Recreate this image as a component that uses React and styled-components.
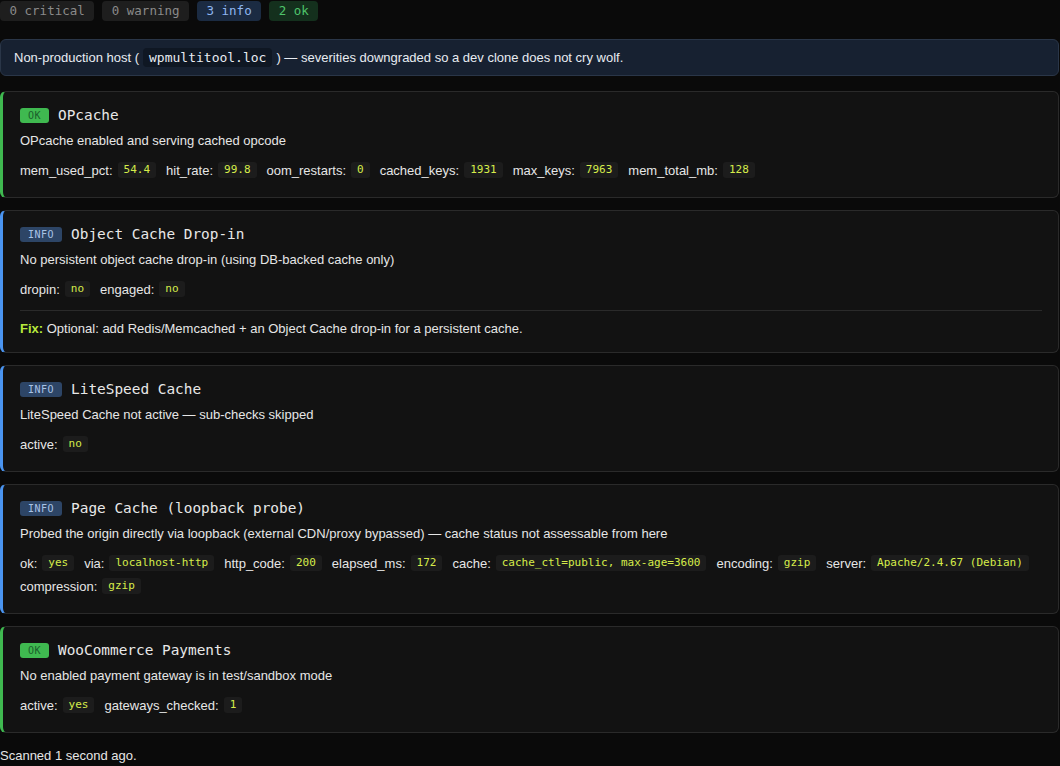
import React from 'react';
import styled, { createGlobalStyle } from 'styled-components';

const checks = [
  {
    level: 'ok',
    title: 'OPcache',
    message: 'OPcache enabled and serving cached opcode',
    facts: [
      ['mem_used_pct', '54.4'], ['hit_rate', '99.8'], ['oom_restarts', '0'],
      ['cached_keys', '1931'], ['max_keys', '7963'], ['mem_total_mb', '128'],
    ],
  },
  {
    level: 'info',
    title: 'Object Cache Drop-in',
    message: 'No persistent object cache drop-in (using DB-backed cache only)',
    facts: [['dropin', 'no'], ['engaged', 'no']],
    fix: 'Optional: add Redis/Memcached + an Object Cache drop-in for a persistent cache.',
  },
  {
    level: 'info',
    title: 'LiteSpeed Cache',
    message: 'LiteSpeed Cache not active \u2014 sub-checks skipped',
    facts: [['active', 'no']],
  },
  {
    level: 'info',
    title: 'Page Cache (loopback probe)',
    message: 'Probed the origin directly via loopback (external CDN/proxy bypassed) \u2014 cache status not assessable from here',
    facts: [
      ['ok', 'yes'], ['via', 'localhost-http'], ['http_code', '200'], ['elapsed_ms', '172'],
      ['cache', 'cache_ctl=public, max-age=3600'], ['encoding', 'gzip'], ['server', 'Apache/2.4.67 (Debian)'],
      ['compression', 'gzip'],
    ],
  },
  {
    level: 'ok',
    title: 'WooCommerce Payments',
    message: 'No enabled payment gateway is in test/sandbox mode',
    facts: [['active', 'yes'], ['gateways_checked', '1']],
  },
];

const GlobalStyle = createGlobalStyle`
  html, body {
    margin: 0;
    background: #0a0a0a;
  }
  body {
    color: #e6e6e6;
    font-family: "Liberation Sans", Arial, sans-serif;
    font-size: 13px;
  }
`;

const Page = styled.div`
  width: 1059px;
  padding-top: 1px;
`;

const Summary = styled.div`
  display: flex;
  gap: 8px;
`;

const tones = {
  critical: { bg: '#1e1e1e', fg: '#8a8a8a' },
  warning: { bg: '#1e1e1e', fg: '#8a8a8a' },
  info: { bg: '#1b2b42', fg: '#8fb6ef' },
  ok: { bg: '#14301d', fg: '#4fc46b' },
};

const Count = styled.span`
  font-family: "DejaVu Sans Mono", "Liberation Mono", monospace;
  font-size: 12.5px;
  line-height: 20px;
  padding: 0 9.5px;
  border-radius: 4px;
  background: ${(p) => tones[p.$tone].bg};
  color: ${(p) => tones[p.$tone].fg};
`;

const Banner = styled.div`
  margin-top: 18px;
  background: #172131;
  border: 1px solid #2a3648;
  border-radius: 6px;
  padding: 0 13px;
  height: 35px;
  display: flex;
  align-items: center;
  color: #e8ecf2;
`;

const Host = styled.code`
  font-family: "DejaVu Sans Mono", "Liberation Mono", monospace;
  font-size: 13px;
  background: #0f1723;
  border-radius: 4px;
  padding: 2px 6px;
  margin: 0 4px;
`;

const List = styled.div`
  margin-top: 15px;
  display: flex;
  flex-direction: column;
  gap: 12px;
`;

const Card = styled.div`
  background: #121212;
  border: 1px solid #2a2a2a;
  border-left: 3px solid ${(p) => (p.$level === 'ok' ? '#3fb950' : '#4a94f0')};
  border-radius: 6px;
  padding: 14px 16px 15px 17px;
`;

const Head = styled.div`
  display: flex;
  align-items: center;
  gap: 9px;
  height: 18px;
`;

const Badge = styled.span`
  font-family: "DejaVu Sans Mono", "Liberation Mono", monospace;
  font-size: 10px;
  letter-spacing: 0.5px;
  line-height: 15px;
  padding: 0 8px;
  border-radius: 3px;
  background: ${(p) => (p.$level === 'ok' ? '#3fb950' : '#2d4566')};
  color: ${(p) => (p.$level === 'ok' ? '#1b5e2c' : '#a9c3e6')};
`;

const Title = styled.span`
  font-family: "DejaVu Sans Mono", "Liberation Mono", monospace;
  font-size: 14.4px;
  color: #e8e8e8;
`;

const Message = styled.div`
  margin-top: 9px;
  line-height: 16px;
`;

const Facts = styled.div`
  margin-top: 13px;
  padding-bottom: 4px;
  display: flex;
  flex-wrap: wrap;
  align-items: center;
  gap: 7px 10px;
`;

const Pair = styled.span`
  display: flex;
  align-items: center;
  gap: 5px;
  white-space: nowrap;
`;

const Value = styled.code`
  font-family: "DejaVu Sans Mono", "Liberation Mono", monospace;
  font-size: 11px;
  line-height: 16px;
  padding: 0 6px;
  border-radius: 3px;
  background: #1c1c1c;
  color: #d6ec4a;
  white-space: nowrap;
`;

const Fix = styled.div`
  margin-top: 9px;
  padding-top: 10px;
  border-top: 1px solid #2a2a2a;
  line-height: 16px;
`;

const FixLabel = styled.b`
  color: #b6e83c;
`;

const Footer = styled.div`
  margin-top: 15px;
  line-height: 16px;
`;

export default function App() {
  return (
    <Page>
      <GlobalStyle />
      <Summary>
        <Count $tone="critical">0 critical</Count>
        <Count $tone="warning">0 warning</Count>
        <Count $tone="info">3 info</Count>
        <Count $tone="ok">2 ok</Count>
      </Summary>
      <Banner>
        Non-production host (<Host>wpmultitool.loc</Host>) — severities downgraded so a dev clone does not cry wolf.
      </Banner>
      <List>
        {checks.map((c) => (
          <Card key={c.title} $level={c.level}>
            <Head>
              <Badge $level={c.level}>{c.level.toUpperCase()}</Badge>
              <Title>{c.title}</Title>
            </Head>
            <Message>{c.message}</Message>
            <Facts>
              {c.facts.map(([k, v]) => (
                <Pair key={k}>
                  {k}:<Value>{v}</Value>
                </Pair>
              ))}
            </Facts>
            {c.fix && (
              <Fix>
                <FixLabel>Fix:</FixLabel> {c.fix}
              </Fix>
            )}
          </Card>
        ))}
      </List>
      <Footer>Scanned 1 second ago.</Footer>
    </Page>
  );
}
